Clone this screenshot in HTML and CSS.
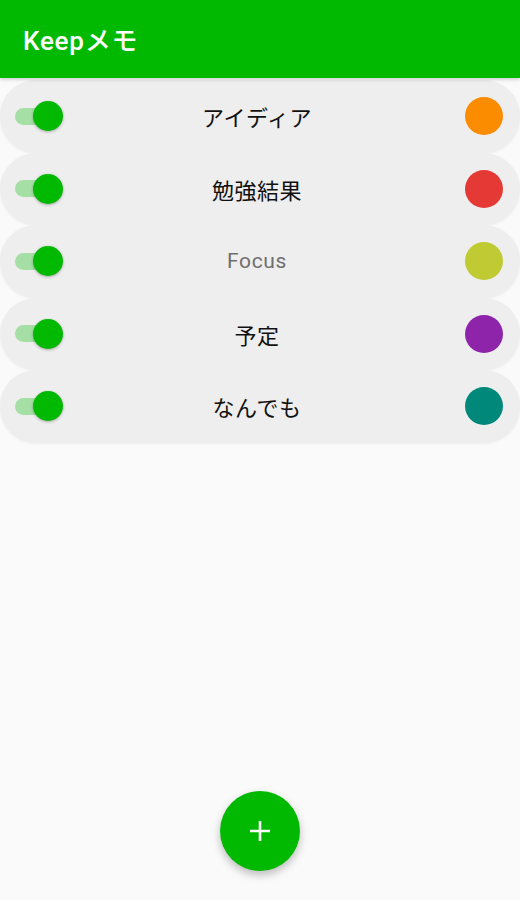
FILE: index.html
```html
<!DOCTYPE html>
<html lang="ja">
<head>
<meta charset="utf-8">
<title>Keepメモ</title>
<link rel="stylesheet" href="styles.css">
</head>
<body>
<div class="app">
  <header class="appbar"><h1 class="title">Keepメモ</h1></header>
  <ul class="list">
    <li class="row"><span class="switch"><span class="track"></span><span class="thumb"></span></span><span class="label">アイディア</span><span class="dot orange"></span></li>
    <li class="row"><span class="switch"><span class="track"></span><span class="thumb"></span></span><span class="label">勉強結果</span><span class="dot red"></span></li>
    <li class="row"><span class="switch"><span class="track"></span><span class="thumb"></span></span><span class="label latin">Focus</span><span class="dot lime"></span></li>
    <li class="row"><span class="switch"><span class="track"></span><span class="thumb"></span></span><span class="label">予定</span><span class="dot purple"></span></li>
    <li class="row"><span class="switch"><span class="track"></span><span class="thumb"></span></span><span class="label">なんでも</span><span class="dot teal"></span></li>
  </ul>
  <button class="fab" aria-label="追加">
    <svg width="22" height="22" viewBox="0 0 22 22"><path d="M11 1v20M1 11h20" stroke="#fff" stroke-width="2.6" fill="none"/></svg>
  </button>
</div>
</body>
</html>
```
FILE: styles.css
```css
* { box-sizing: border-box; }
html, body { margin: 0; padding: 0; }
body {
  background: #fafafa;
  font-family: "Noto Sans CJK JP", Roboto, "Noto Sans", sans-serif;
  width: 520px;
  height: 900px;
  overflow: hidden;
}
.app {
  height: 900px;
  display: flex;
  flex-direction: column;
}
.appbar {
  height: 78px;
  background: #00b900;
  display: flex;
  align-items: center;
  padding-left: 23px;
  box-shadow: 0 2px 3px rgba(0,0,0,0.15);
  position: relative;
  z-index: 2;
}
.title {
  margin: 0;
  color: #fff;
  font-family: Roboto, "Noto Sans CJK JP", sans-serif;
  font-weight: 500;
  font-size: 26px;
  letter-spacing: 0.8px;
  padding-bottom: 2px;
}
.list {
  list-style: none;
  margin: 2px 0 0;
  padding: 0;
  display: flex;
  flex-direction: column;
}
.row {
  height: 72.5px;
  background: #eeeeee;
  border-radius: 36px;
  display: flex;
  align-items: center;
  padding: 0 17px 0 15px;
  box-shadow: 0 1px 3px rgba(0,0,0,0.05);
}
.switch {
  width: 48px;
  height: 30px;
  display: flex;
  align-items: center;
  position: relative;
}
.track {
  width: 40px;
  height: 17px;
  border-radius: 9px;
  background: #a6dfa6;
}
.thumb {
  position: absolute;
  left: 18px;
  top: 0;
  width: 30px;
  height: 30px;
  border-radius: 50%;
  background: #00b900;
  box-shadow: 0 1px 3px rgba(0,0,0,0.3);
}
.label {
  flex: 1;
  text-align: center;
  font-size: 22px;
  letter-spacing: 0.5px;
  color: #111;
  padding-right: 14px;
}
.label.latin {
  font-family: Roboto, sans-serif;
  font-size: 21px;
  letter-spacing: 0.6px;
  color: #6e6e6e;
}
.dot {
  width: 38px;
  height: 38px;
  border-radius: 50%;
}
.orange { background: #fb8c00; }
.red { background: #e53935; }
.lime { background: #c0ca33; }
.purple { background: #8e24aa; }
.teal { background: #00897b; }
.fab {
  margin: auto auto 29px;
  width: 80px;
  height: 80px;
  border-radius: 50%;
  border: none;
  background: #00b900;
  display: flex;
  align-items: center;
  justify-content: center;
  box-shadow: 0 4px 8px rgba(0,0,0,0.25);
  padding: 0;
}
```
